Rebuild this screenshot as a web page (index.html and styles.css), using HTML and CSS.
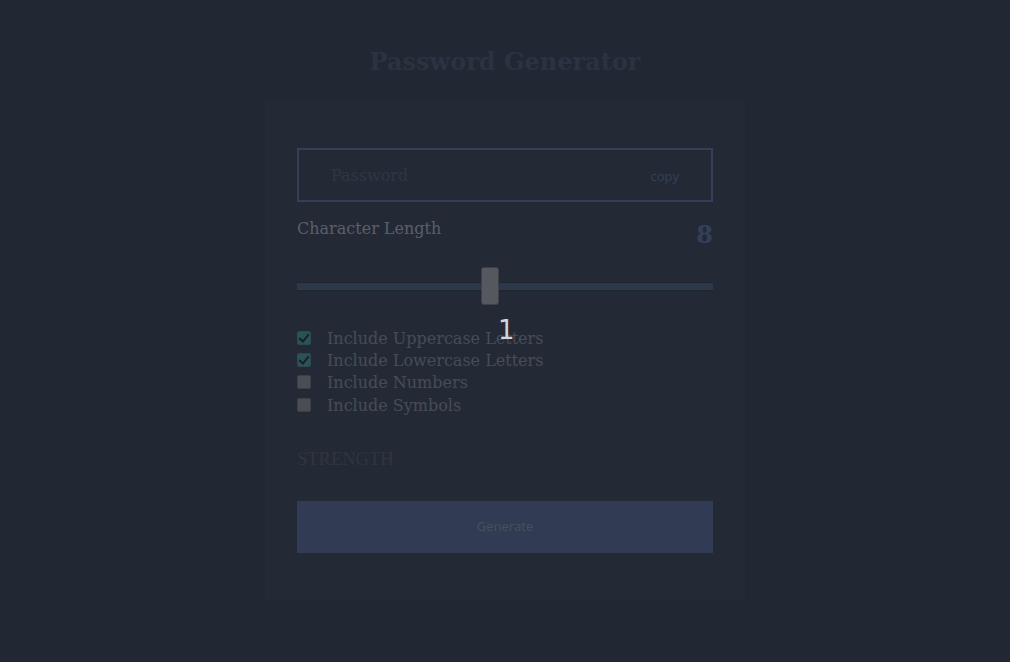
FILE: index.html
```html
<!DOCTYPE html>
<html lang="en">
<head>
<meta charset="utf-8">
<title>Password Generator</title>
<link rel="stylesheet" href="styles.css">
</head>
<body>
<main class="page">
  <h1 class="title">Password Generator</h1>
  <section class="card">
    <div class="field">
      <input class="field-input" type="text" placeholder="Password" readonly>
      <button class="copy-btn" type="button">copy</button>
    </div>
    <div class="length-row">
      <span class="length-label">Character Length</span>
      <span class="length-value">8</span>
    </div>
    <div class="slider-wrap">
      <input class="slider" type="range" min="0" max="26" value="12">
      <span class="slider-output">1</span>
    </div>
    <ul class="options">
      <li class="option"><input class="check" type="checkbox" checked><span>Include Uppercase Letters</span></li>
      <li class="option"><input class="check" type="checkbox" checked><span>Include Lowercase Letters</span></li>
      <li class="option"><input class="check" type="checkbox"><span>Include Numbers</span></li>
      <li class="option"><input class="check" type="checkbox"><span>Include Symbols</span></li>
    </ul>
    <div class="strength">STRENGTH</div>
    <button class="generate" type="button">Generate</button>
  </section>
</main>
</body>
</html>
```
FILE: styles.css
```css
html, body {
  margin: 0;
  padding: 0;
  background: #212833;
  font-family: "DejaVu Serif", serif;
}
.page {
  display: flex;
  flex-direction: column;
  align-items: center;
  padding-top: 47px;
}
.title {
  margin: 0 0 23px;
  font-size: 24px;
  line-height: 30px;
  font-weight: bold;
  color: #2c3242;
}
.card {
  width: 416px;
  padding: 48px 32px;
  background: #232a36;
  display: flex;
  flex-direction: column;
}
.field {
  height: 54px;
  box-sizing: border-box;
  border: 2px solid #34405a;
  display: flex;
  align-items: center;
  padding: 0 32px;
  flex-shrink: 0;
}
.field-input {
  flex: 1;
  min-width: 0;
  background: transparent;
  border: 0;
  outline: none;
  font-family: "DejaVu Serif", serif;
  font-size: 16px;
  color: #2e3544;
  padding: 0;
  margin-top: 1px;
}
.field-input::placeholder {
  color: #2f3646;
}
.copy-btn {
  background: transparent;
  border: 0;
  padding: 0;
  margin-top: 2px;
  font-family: "Open Sans", sans-serif;
  font-size: 13px;
  color: #34405a;
}
.length-row {
  display: flex;
  justify-content: space-between;
  align-items: flex-end;
  margin-top: 17px;
  height: 28px;
  flex-shrink: 0;
}
.length-label {
  font-size: 16px;
  color: #5a5f69;
  align-self: flex-start;
  line-height: 20px;
}
.length-value {
  font-size: 24px;
  font-weight: bold;
  color: #34405a;
  line-height: 24px;
}
.slider-wrap {
  position: relative;
  margin-top: 20px;
  height: 38px;
  display: flex;
  align-items: center;
  flex-shrink: 0;
}
.slider {
  -webkit-appearance: none;
  appearance: none;
  width: 100%;
  height: 9px;
  margin: 0;
  background: #2b394a;
  border-top: 1px solid #1f2630;
  border-bottom: 1px solid #1f2630;
  box-sizing: border-box;
  outline: none;
}
.slider::-webkit-slider-thumb {
  -webkit-appearance: none;
  appearance: none;
  width: 18px;
  height: 38px;
  border-radius: 3px;
  background: #55585f;
  border: 1px solid #3e4148;
  box-sizing: border-box;
  cursor: pointer;
}
.slider-output {
  position: absolute;
  left: 201px;
  top: 48px;
  font-family: "DejaVu Sans", sans-serif;
  font-size: 26px;
  line-height: 30px;
  color: #d2d6dc;
}
.options {
  list-style: none;
  margin: 22px 0 0;
  padding: 0;
  display: flex;
  flex-direction: column;
  flex-shrink: 0;
}
.option {
  display: flex;
  align-items: center;
  height: 22px;
  font-size: 16px;
  color: #474c56;
}
.option:nth-child(4) { margin-top: 1px; }
.check {
  -webkit-appearance: none;
  appearance: none;
  width: 14px;
  height: 14px;
  margin: 0 16px 0 0;
  border-radius: 2px;
  background: #4a4d54;
  border: 1px solid #3b3e45;
  box-sizing: border-box;
  position: relative;
}
.check:checked {
  background: #2a5357;
  border-color: #2d4a52;
}
.check:checked::after {
  content: "";
  position: absolute;
  left: 3px;
  top: 0px;
  width: 4px;
  height: 8px;
  border: solid #1a2026;
  border-width: 0 2px 2px 0;
  transform: rotate(40deg);
}
.strength {
  margin-top: 32px;
  font-family: "Liberation Serif", serif;
  font-size: 18.5px;
  line-height: 22px;
  color: #30353f;
  flex-shrink: 0;
}
.generate {
  margin-top: 31px;
  height: 52px;
  padding: 0 0 2px;
  flex-shrink: 0;
  border: 0;
  background: #313c54;
  font-family: "Open Sans", sans-serif;
  font-size: 13px;
  color: #4a4f5a;
}
```
